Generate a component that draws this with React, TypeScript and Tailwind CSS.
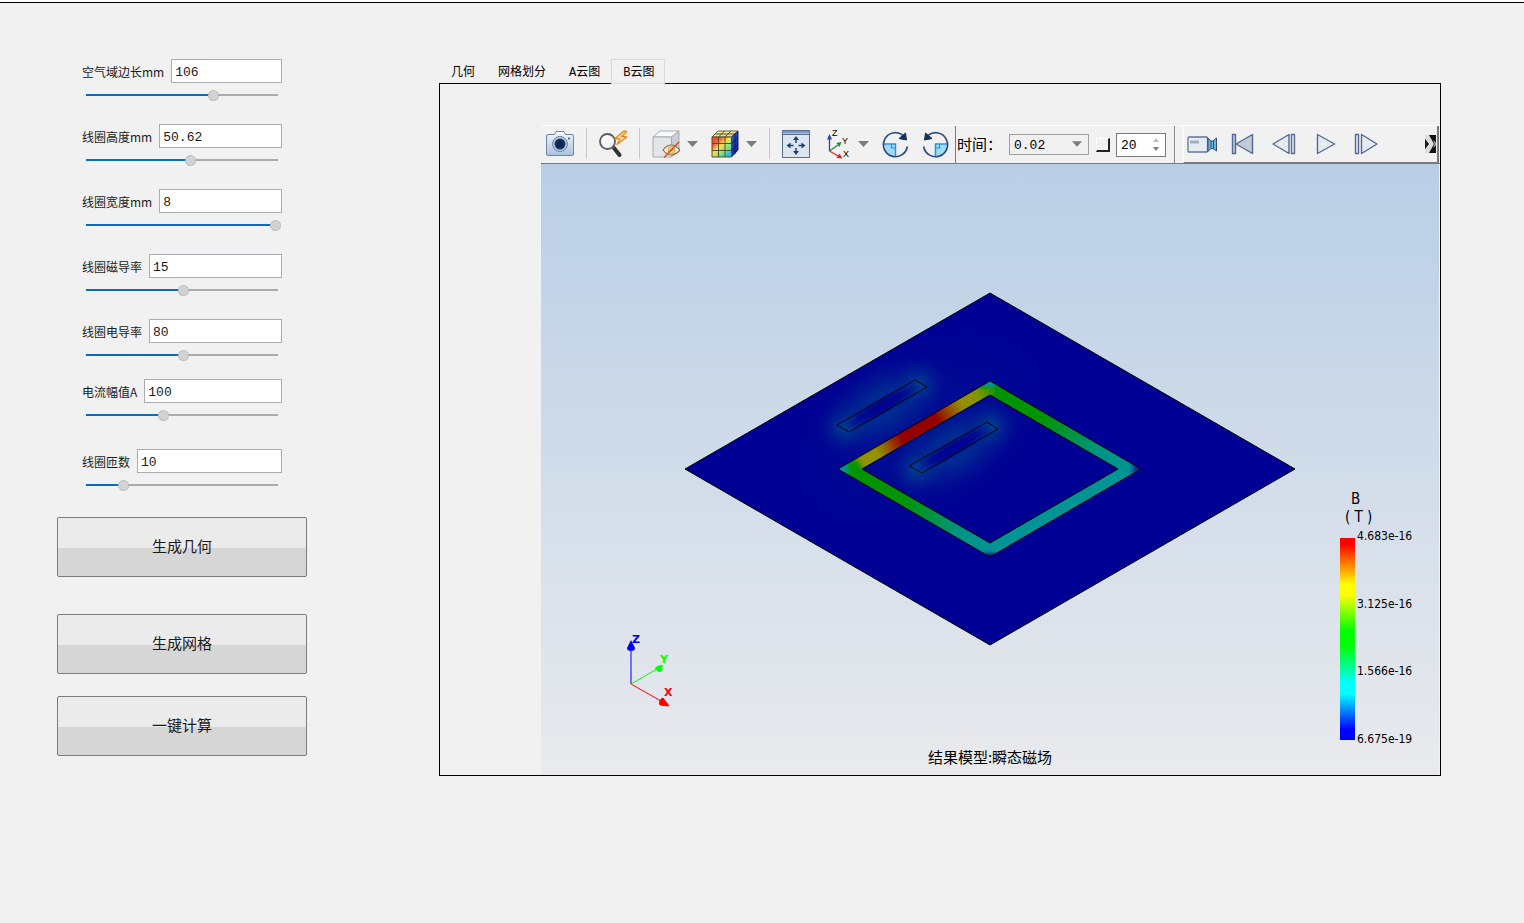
import { useState, type ReactNode } from 'react'

interface Param {
  id: string
  label: string
  value: string
  pos: number
  className?: string
}

const params: Param[] = [
  { id: 'air', label: '空气域边长mm', value: '106', pos: 66.6 },
  { id: 'height', label: '线圈高度mm', value: '50.62', pos: 54.4, className: 'mt-[21px]' },
  { id: 'width', label: '线圈宽度mm', value: '8', pos: 99.4, className: 'mt-[21px]' },
  { id: 'permeability', label: '线圈磁导率', value: '15', pos: 50.6, className: 'mt-[21px]' },
  { id: 'conductivity', label: '线圈电导率', value: '80', pos: 50.6, className: 'mt-[21px]' },
  { id: 'current', label: '电流幅值A', value: '100', pos: 40.2, className: 'mt-4' },
  { id: 'turns', label: '线圈匝数', value: '10', pos: 19, className: 'mt-[26px]' },
]

const tabs = ['几何', '网格划分', 'A云图', 'B云图']
const legend = ['4.683e-16', '3.125e-16', '1.566e-16', '6.675e-19']

function ParamField({ id, label, value, pos, className }: Param) {
  const [text, setText] = useState(value)
  const [slider, setSlider] = useState(pos)
  return (
    <div className={className}>
      <div className="flex items-center gap-[7px]">
        <label htmlFor={id} className="pt-px text-xs whitespace-nowrap text-[#1a1a1a]">{label}</label>
        <input
          id={id}
          value={text}
          onChange={(e) => setText(e.target.value)}
          className="min-w-0 flex-1 h-6 px-[3px] pt-[2px] border border-[#abadb3] bg-white font-['Liberation_Mono',monospace] text-[13px] text-[#1a1a1a] outline-none"
        />
      </div>
      <input
        type="range"
        aria-label={label}
        min={0}
        max={100}
        step={0.2}
        value={slider}
        onChange={(e) => setSlider(Number(e.target.value))}
        className="block w-full h-4 mt-1 appearance-none bg-center bg-no-repeat bg-[length:192px_2px] [&::-webkit-slider-thumb]:appearance-none [&::-webkit-slider-thumb]:size-[11px] [&::-webkit-slider-thumb]:rounded-full [&::-webkit-slider-thumb]:bg-[#d2d2d2] [&::-webkit-slider-thumb]:border [&::-webkit-slider-thumb]:border-dotted [&::-webkit-slider-thumb]:border-[#a8a8a8]"
        style={{ backgroundImage: `linear-gradient(to right, #0a6bc1 ${slider}%, #ababab ${slider}%)` }}
      />
    </div>
  )
}

function ActionButton({ children, className }: { children: ReactNode; className: string }) {
  return (
    <button
      type="button"
      className={`block w-full h-[60px] pb-[2px] rounded-[2px] border border-[#7b7b7b] bg-linear-to-b from-[#ebebeb] from-52% to-[#d6d6d6] to-52% text-[15px] text-[#1a1a1a] ${className}`}
    >
      {children}
    </button>
  )
}

function Tool({ label, className = '', children }: { label: string; className?: string; children: ReactNode }) {
  return (
    <button type="button" aria-label={label} className={`shrink-0 ${className}`}>
      {children}
    </button>
  )
}

function Caret() {
  return (
    <svg viewBox="0 0 11 6" className="w-[11px] h-[6px]">
      <path d="M0 0H11L5.500 6Z" fill="#7c7c7c" />
    </svg>
  )
}

function Separator() {
  return <span className="ml-3 w-px h-[31px] shrink-0 bg-[#c8c8c8]" />
}

function CameraIcon() {
  return (
    <svg viewBox="0 0 28 28" className="size-7">
      <defs>
        <linearGradient id="cam" x2="0" y2="1">
          <stop offset="0" stopColor="#f4f8fc" />
          <stop offset="1" stopColor="#a9c2dc" />
        </linearGradient>
      </defs>
      <path d="M0.500 6Q0.500 4.500 2 4.500H8.500L10 1.500H18L19.500 4.500H26Q27.500 4.500 27.500 6V24Q27.500 25.500 26 25.500H2Q0.500 25.500 0.500 24Z" fill="url(#cam)" stroke="#7088a6" />
      <circle cx="14" cy="14" r="7.500" fill="#b9cbe0" stroke="#6f85a6" />
      <circle cx="14" cy="14" r="5.500" fill="#1b3766" />
      <circle cx="14" cy="14" r="3.500" fill="#0f2450" />
      <circle cx="23" cy="8.500" r="1" fill="#324f7d" />
    </svg>
  )
}

function FlashZoomIcon() {
  return (
    <svg viewBox="0 0 28 28" className="size-7" fill="none">
      <path d="M15 18L20.500 25" stroke="#333" strokeWidth="4" strokeLinecap="round" />
      <path d="M12.500 15L15 18" stroke="#666" strokeWidth="2" />
      <circle cx="8.500" cy="11.500" r="7.500" fill="#f3f6fa" stroke="#5c5c5c" strokeWidth="1.800" />
      <path d="M4 10Q5.500 6.500 9 6.500" stroke="#fff" strokeWidth="2" />
      <path d="M25 1L16 8.500L21 9L18 14.500L28 7L22.500 6.500L28 1.500Z" fill="#fce3a4" stroke="#e58a1c" strokeWidth="1.300" strokeLinejoin="round" />
    </svg>
  )
}

function HideCubeIcon() {
  return (
    <svg viewBox="0 0 28 28" className="size-7" strokeLinejoin="round">
      <path d="M1 7L8 1H27L19.500 7Z" fill="#f8f9fb" stroke="#a7abb3" />
      <path d="M19.500 7L27 1V19L19.500 27Z" fill="#c9cdd5" stroke="#a7abb3" />
      <path d="M1 7H19.500V27H1Z" fill="#e2e5ea" stroke="#a7abb3" />
      <path d="M11 20Q19 10 28 20Q19 30 11 20Z" fill="#fff2d0" stroke="#8a6b3e" strokeWidth="1.200" />
      <circle cx="19.500" cy="20" r="3.500" fill="#f6d99a" stroke="#c79a50" />
      <circle cx="19.500" cy="20" r="1.300" fill="#9b7840" />
      <path d="M12 27.500L27 12" stroke="#d0502c" strokeWidth="1.500" />
    </svg>
  )
}

function FieldCubeIcon() {
  return (
    <svg viewBox="0 0 28 28" className="size-7" strokeLinejoin="round">
      <defs>
        <linearGradient id="cube" x1="0" y1="0.1" x2="0.8" y2="1">
          <stop offset="0" stopColor="#e84a38" />
          <stop offset="0.22" stopColor="#f4573a" />
          <stop offset="0.45" stopColor="#fbe04c" />
          <stop offset="0.7" stopColor="#7de488" />
          <stop offset="1" stopColor="#20b8e8" />
        </linearGradient>
        <linearGradient id="cubeSide" x2="0.6" y2="1">
          <stop offset="0" stopColor="#2d62dc" />
          <stop offset="1" stopColor="#0a1e9c" />
        </linearGradient>
      </defs>
      <path d="M1 7L7 1H27L20.500 7Z" fill="#ebe4a0" stroke="#6c6638" />
      <path d="M20.500 7L27 1V20L20.500 27Z" fill="url(#cubeSide)" stroke="#122058" />
      <path d="M1 7H20.500V27H1Z" fill="url(#cube)" stroke="#5c4e24" />
      <path d="M7.500 7V27M14 7V27M1 13.500H20.500M1 20.500H20.500M4 4H24M7.500 7L13.500 1M14 7L20 1" fill="none" stroke="#5c4e24" />
      <path d="M24 4V24M20.500 13.500L27 7.500M20.500 20.500L27 14" fill="none" stroke="#122058" />
    </svg>
  )
}

function FitIcon() {
  return (
    <svg viewBox="0 0 28 28" className="size-7">
      <path d="M0.500 0.500H27.500V27.500H0.500Z" fill="#dce4ef" stroke="#5a6e8e" />
      <path d="M1 1H27V3.500H1Z" fill="#7f9cc4" />
      <path d="M1 4.500H27" stroke="#5a6e8e" />
      <path d="M14 8V13M14 18V23M6 15.500H11.500M16.500 15.500H22" stroke="#23406c" strokeWidth="1.500" />
      <path d="M14 6L17 10H11ZM14 25L17 21H11ZM4.500 15.500L8.500 12.500V18.500ZM23.500 15.500L19.500 12.500V18.500Z" fill="#23406c" />
    </svg>
  )
}

function AxesIcon() {
  return (
    <svg viewBox="0 0 28 28" className="size-7 overflow-visible font-['Liberation_Sans',sans-serif] text-[9px]">
      <path d="M3.500 21V8" stroke="#2b489e" strokeWidth="1.300" />
      <path d="M3.500 4L6 9.500H1Z" fill="#2b489e" />
      <path d="M3.500 21L12 15" stroke="#1d8a3c" strokeWidth="1.300" />
      <path d="M15.500 12L13.500 17L10.500 13Z" fill="#1d8a3c" />
      <path d="M3.500 21L12 26" stroke="#e12626" strokeWidth="1.300" />
      <path d="M16.500 28.500L10.500 28L13.500 23.500Z" fill="#e12626" />
      <text x="6" y="6">Z</text>
      <text x="16" y="14">Y</text>
      <text x="17" y="27">X</text>
    </svg>
  )
}

function RotateIcon({ flip }: { flip?: boolean }) {
  return (
    <svg viewBox="0 0 28 28" className={flip ? 'size-7 -scale-x-100' : 'size-7'} fill="none">
      <path d="M3 14.500H14V26Q4 25 3 14.500Z" fill="#9cdcf8" />
      <path d="M3 14H14.500V26" stroke="#3193cf" strokeWidth="1.500" />
      <path d="M10.500 14V18H14.500" stroke="#3193cf" strokeWidth="1.200" />
      <path d="M21.500 5A12 12 0 1 0 26.300 16.500" stroke="#304f7c" strokeWidth="1.700" />
      <path d="M24.500 3L25.500 10L18 8.500Z" fill="#1a3156" stroke="#1a3156" />
    </svg>
  )
}

function VideoIcon() {
  return (
    <svg viewBox="0 0 30 20" className="w-[30px] h-5">
      <rect x="1" y="3" width="19.500" height="15" rx="1" fill="#e7ecf3" stroke="#5c759c" strokeWidth="1.300" />
      <path d="M3 6.500H12V9.500H3Z" fill="#a4acb8" />
      <path d="M21 4L24 7H26L29.500 4V17L26 14.500H24L21 17.500Z" fill="#69b3dc" stroke="#31527f" />
      <path d="M24 7V14.500M26.500 7V14.500" stroke="#31527f" />
    </svg>
  )
}

function PlayIcon({ kind }: { kind: 'first' | 'back' | 'play' | 'forward' }) {
  const shapes = {
    first: 'M1.500 1.500H4.500V20.500H1.500ZM21.500 1.500V20.500L5 11Z',
    back: 'M17 1.500V20.500L1 11ZM19.500 1.500H22.500V20.500H19.500Z',
    play: 'M4.500 1.500V20.500L21.500 11Z',
    forward: 'M1.500 1.500H4.500V20.500H1.500ZM7.500 1.500V20.500L23 11Z',
  }
  return (
    <svg viewBox="0 0 24 22" className="w-6 h-[22px]">
      <path d={shapes[kind]} fill={kind === 'first' ? '#c2cad5' : '#e6ebf2'} stroke="#526a94" strokeWidth="1.400" strokeLinejoin="round" />
    </svg>
  )
}

function Toolbar() {
  return (
    <div className="flex h-[39px] border-t border-white border-b border-b-[#7a7a7a]">
      <div className="flex items-center px-[5px] pb-[2px] border-r border-[#7a7a7a]">
        <Tool label="截图"><CameraIcon /></Tool>
        <Separator />
        <Tool label="快速缩放" className="ml-3"><FlashZoomIcon /></Tool>
        <Separator />
        <Tool label="显示隐藏" className="ml-3"><HideCubeIcon /></Tool>
        <Tool label="显示选项" className="ml-[7px]"><Caret /></Tool>
        <Tool label="云图" className="ml-[13px]"><FieldCubeIcon /></Tool>
        <Tool label="云图选项" className="ml-[7px]"><Caret /></Tool>
        <Separator />
        <Tool label="适应窗口" className="ml-3"><FitIcon /></Tool>
        <Tool label="视角" className="ml-4"><AxesIcon /></Tool>
        <Tool label="视角选项" className="ml-1"><Caret /></Tool>
        <Tool label="顺时针旋转" className="ml-3"><RotateIcon /></Tool>
        <Tool label="逆时针旋转" className="ml-[13px]"><RotateIcon flip /></Tool>
      </div>
      <div className="flex items-center pl-px pr-2 border-r border-[#8c8c8c] text-[15px]">
        <label htmlFor="time" className="w-[45px] whitespace-nowrap">时间：</label>
        <div className="relative ml-[7px]">
          <select id="time" className="block appearance-none w-20 h-[21px] pl-1 pt-px border border-[#a0a0a0] bg-[#f0f0f0] font-['Liberation_Mono',monospace] text-[13px]">
            <option>0.02</option>
          </select>
          <svg viewBox="0 0 11 6" className="absolute right-[7px] top-[7px] w-[10px] h-[6px] pointer-events-none">
            <path d="M0 0H11L5.500 6Z" fill="#7c7c7c" />
          </svg>
        </div>
        <input type="checkbox" aria-label="循环" className="ml-[7px] appearance-none size-[14px] border-r-2 border-b-2 border-[#222] border-t border-l border-t-white border-l-white bg-[#f0f0f0]" />
        <div className="relative ml-[6px]">
          <input aria-label="帧数" defaultValue="20" className="block w-[50px] h-6 pl-1 pt-px border border-[#7a7a7a] bg-white font-['Liberation_Mono',monospace] text-[13px]" />
          <svg viewBox="0 0 6 14" className="absolute right-[7px] top-[5px] w-[6px] h-[14px] pointer-events-none">
            <path d="M0 4L3 0L6 4Z" fill="#bdbdbd" />
            <path d="M0 9L3 13L6 9Z" fill="#7c7c7c" />
          </svg>
        </div>
      </div>
      <div className="flex flex-1 items-center ml-2 mr-px pl-[3px] border-l border-l-white border-r-2 border-b border-[#7a7a7a]">
        <Tool label="录制"><VideoIcon /></Tool>
        <div className="flex ml-[14px] gap-[17px]">
          <Tool label="第一帧"><PlayIcon kind="first" /></Tool>
          <Tool label="上一帧"><PlayIcon kind="back" /></Tool>
          <Tool label="播放"><PlayIcon kind="play" /></Tool>
          <Tool label="下一帧"><PlayIcon kind="forward" /></Tool>
        </div>
        <Tool label="更多" className="ml-auto mr-px">
          <svg viewBox="0 0 11 18" className="w-[11px] h-[18px]">
            <path d="M0 3H4V0H11V18H4V15H0Z" fill="#111" />
            <path d="M0 0H4L9 9L4 18H0V14L4 9L0 4Z" fill="#ddd" />
            <path d="M0 4L3.500 9L0 14Z" fill="#222" />
            <path d="M8 5L11 7.500V10.500L8 13L9.500 9Z" fill="#999" />
          </svg>
        </Tool>
      </div>
    </div>
  )
}

// Isometric plate with the iron core ring and the two coil cross sections
function FieldModel() {
  return (
    <svg viewBox="0 0 610 352" className="w-[610px] h-[352px] overflow-visible">
      <defs>
        <radialGradient id="halo">
          <stop offset="0" stopColor="#004090" stopOpacity="0.85" />
          <stop offset="0.35" stopColor="#003890" stopOpacity="0.6" />
          <stop offset="0.6" stopColor="#002890" stopOpacity="0.35" />
          <stop offset="0.8" stopColor="#001890" stopOpacity="0.15" />
          <stop offset="1" stopColor="#000090" stopOpacity="0" />
        </radialGradient>
        <radialGradient id="tip">
          <stop offset="0" stopColor="#005c90" stopOpacity="0.6" />
          <stop offset="0.5" stopColor="#004890" stopOpacity="0.25" />
          <stop offset="1" stopColor="#002090" stopOpacity="0" />
        </radialGradient>
        <radialGradient id="core">
          <stop offset="0" stopColor="#000090" />
          <stop offset="0.5" stopColor="#000090" stopOpacity="0.85" />
          <stop offset="1" stopColor="#000890" stopOpacity="0" />
        </radialGradient>
        <linearGradient id="hot" gradientUnits="userSpaceOnUse" x1="165" y1="176" x2="305" y2="95">
          <stop offset="0" stopColor="#009400" />
          <stop offset="0.04" stopColor="#209400" />
          <stop offset="0.1" stopColor="#949400" />
          <stop offset="0.2" stopColor="#949000" />
          <stop offset="0.28" stopColor="#945000" />
          <stop offset="0.37" stopColor="#940000" />
          <stop offset="0.62" stopColor="#940000" />
          <stop offset="0.72" stopColor="#945400" />
          <stop offset="0.8" stopColor="#949000" />
          <stop offset="0.91" stopColor="#869400" />
          <stop offset="1" stopColor="#209400" />
        </linearGradient>
        <linearGradient id="right" gradientUnits="userSpaceOnUse" x1="305" y1="95" x2="444" y2="176">
          <stop offset="0.35" stopColor="#009400" />
          <stop offset="0.55" stopColor="#009438" />
          <stop offset="0.78" stopColor="#009484" />
          <stop offset="1" stopColor="#009494" />
        </linearGradient>
        <linearGradient id="left" gradientUnits="userSpaceOnUse" x1="165" y1="176" x2="305" y2="256">
          <stop offset="0.35" stopColor="#009400" />
          <stop offset="0.55" stopColor="#009434" />
          <stop offset="0.78" stopColor="#009484" />
          <stop offset="1" stopColor="#009494" />
        </linearGradient>
        <radialGradient id="teal">
          <stop offset="0" stopColor="#009494" />
          <stop offset="0.4" stopColor="#009484" />
          <stop offset="1" stopColor="#009400" stopOpacity="0" />
        </radialGradient>
        <radialGradient id="cold">
          <stop offset="0" stopColor="#001890" />
          <stop offset="0.4" stopColor="#003c90" />
          <stop offset="1" stopColor="#009494" stopOpacity="0" />
        </radialGradient>
        <clipPath id="plate">
          <path d="M305 0L610 176L305 352L0 176Z" />
        </clipPath>
        <clipPath id="ring">
          <path d="M305 88L456 176L305 264L153 176ZM305 102L177 176L305 250L433 176Z" clipRule="evenodd" />
        </clipPath>
      </defs>

      <path d="M305 0L610 176L305 352L0 176Z" fill="#000094" />
      <g clipPath="url(#plate)">
        <ellipse cx="235" cy="135" rx="190" ry="120" fill="url(#halo)" opacity="0.25" transform="rotate(-30 235 135)" />
        {[[197, 113], [269, 155]].map(([x, y]) => (
          <g key={x} transform={`translate(${x} ${y}) rotate(-30)`}>
            <ellipse rx="86" ry="46" fill="url(#halo)" />
            <circle cx="-43" r="26" fill="url(#tip)" />
            <circle cx="43" r="26" fill="url(#tip)" />
            <ellipse rx="46" ry="9" fill="url(#core)" />
          </g>
        ))}
      </g>
      <path d="M305 0L610 176L305 352L0 176Z" fill="none" stroke="#000" />
      <path d="M230 87L242 94L164 139L152 132Z" fill="none" stroke="#000" />
      <path d="M302 129L313 136L237 180L224 173Z" fill="none" stroke="#000" />

      <g clipPath="url(#ring)">
        <path d="M153 176L305 264V250L177 176Z" fill="url(#left)" />
        <path d="M305 88L456 176H433L305 102Z" fill="url(#right)" />
        <path d="M305 264L456 176H433L305 250Z" fill="#009494" />
        <path d="M153 176L305 88V102L177 176Z" fill="url(#hot)" />
        <circle cx="168" cy="176" r="8" fill="#009400" opacity="0.6" />
        <circle cx="155" cy="176" r="15" fill="url(#teal)" />
        <circle cx="305" cy="98" r="5" fill="#609400" opacity="0.5" />
        <ellipse cx="305" cy="89" rx="17" ry="9" fill="url(#teal)" />
        <circle cx="456" cy="176" r="15" fill="url(#cold)" />
        <ellipse cx="305" cy="264" rx="18" ry="8" fill="url(#cold)" />
      </g>
      <path d="M305 88L456 176L305 264L153 176ZM305 102L177 176L305 250L433 176Z" fill="none" stroke="#000" />
    </svg>
  )
}

function Triad() {
  return (
    <svg viewBox="0 0 60 80" className="absolute left-20 bottom-16 w-[60px] h-20 font-['DejaVu_Sans',sans-serif] text-[11px] font-bold">
      <path d="M10 53V16" stroke="#00f" />
      <path d="M10 9L14 17Q14 20 10 20Q6 20 6 17Z" fill="#00f" />
      <text x="11" y="12" fill="#00f">Z</text>
      <path d="M10 53L36 38" stroke="#0f0" />
      <path d="M42 34L41 40Q37 43 34 37Q36 34 42 34Z" fill="#0f0" />
      <text x="39" y="32" fill="#0f0">Y</text>
      <path d="M10 53L40 70" stroke="#f00" />
      <path d="M48 75L39 74Q37 69 42 67Z" fill="#f00" stroke="#f00" />
      <text x="43" y="65" fill="#f00">X</text>
    </svg>
  )
}

function Legend() {
  return (
    <div className="absolute right-6 bottom-7 w-[75px] font-['DejaVu_Sans_Condensed','DejaVu_Sans',sans-serif]">
      <div className="pl-[11px] text-[15px] leading-[18px]">B</div>
      <div className="pl-[5px] mb-[2px] text-[15px] leading-[18px] whitespace-pre">( T )</div>
      <div className="flex gap-[2px]">
        <div className="w-[15px] h-[202px] mt-[10px] bg-[linear-gradient(to_bottom,#f00_3%,#ff0_23%,#ff0_28%,#0f0_46%,#0f0_53%,#0ff_72%,#0ff_77%,#00f_95%)]" />
        <div className="flex flex-col justify-between h-[219px] text-xs leading-4">
          {legend.map((v) => <span key={v}>{v}</span>)}
        </div>
      </div>
    </div>
  )
}

export default function App() {
  const [active, setActive] = useState('B云图')
  return (
    <div className="min-h-screen bg-[#f1f1f1] text-black font-['Noto_Sans_CJK_SC',sans-serif]">
      <div className="h-[3px] bg-white border-b border-black" />
      <main className="flex items-start pt-14 pl-[57px] pr-[83px] pb-10">
        <form className="w-[250px] shrink-0" onSubmit={(e) => e.preventDefault()}>
          <div className="px-[25px]">
            {params.map((p) => <ParamField key={p.id} {...p} />)}
          </div>
          <ActionButton className="mt-6">生成几何</ActionButton>
          <ActionButton className="mt-[37px]">生成网格</ActionButton>
          <ActionButton className="mt-[22px]">一键计算</ActionButton>
        </form>

        <section className="flex-1 min-w-0 ml-[132px]">
          <div role="tablist" className="flex font-['Liberation_Mono','Noto_Sans_CJK_SC',monospace] text-xs">
            {tabs.map((t) => (
              <button
                key={t}
                type="button"
                role="tab"
                aria-selected={t === active}
                onClick={() => setActive(t)}
                className={`h-[25px] -mb-px pl-[11px] pr-[10px] pt-[3px] border ${t === active ? 'relative border-[#d9d9d9] bg-[#f1f1f1]' : 'border-transparent'}`}
              >
                {t}
              </button>
            ))}
          </div>
          <div className="border border-black pt-[41px] pl-[101px]">
            <Toolbar />
            <div className="relative flex items-center justify-center min-h-[611px] pb-[2px] mr-px bg-linear-to-b from-[#b9cee6] to-[#e9eaed]">
              <FieldModel />
              <Triad />
              <Legend />
              <p className="absolute inset-x-0 bottom-2 text-center text-[15px] leading-5">结果模型:瞬态磁场</p>
            </div>
          </div>
        </section>
      </main>
    </div>
  )
}
